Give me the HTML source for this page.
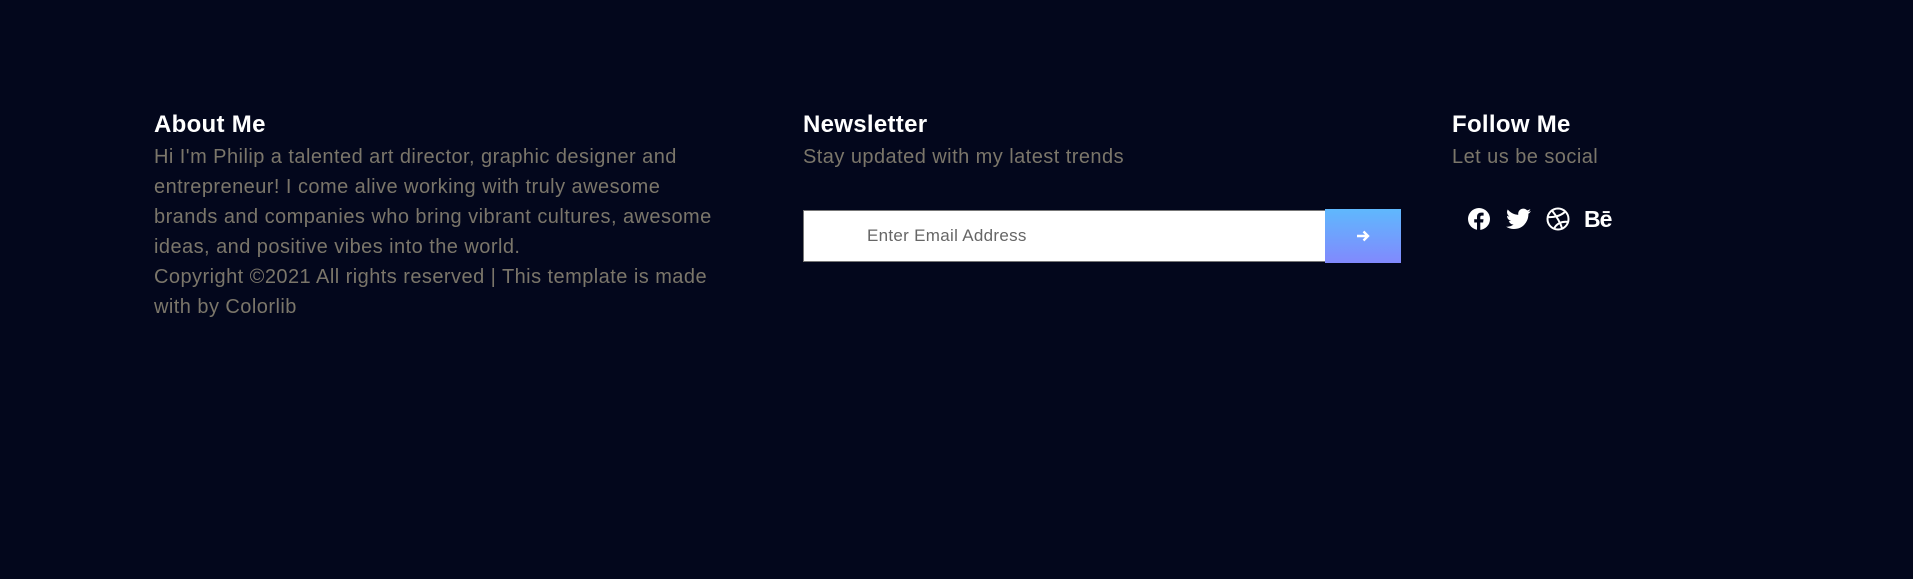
<!DOCTYPE html>
<html><head><meta charset="utf-8"><style>
html,body{margin:0;padding:0;background:#03071c;width:1913px;height:579px;overflow:hidden;font-family:"Liberation Sans",sans-serif}
.h{position:absolute;color:#fff;font-weight:bold;font-size:24px;letter-spacing:0.3px}
.p{position:absolute;color:#7b766a;font-size:20px;letter-spacing:0.45px;line-height:30px}
</style></head><body>
<div class="h" style="left:154px;top:111px">About Me</div>
<div class="p" style="left:154px;top:142px;width:640px">Hi I'm Philip a talented art director, graphic designer and<br>entrepreneur! I come alive working with truly awesome<br>brands and companies who bring vibrant cultures, awesome<br>ideas, and positive vibes into the world.<br>Copyright ©2021 All rights reserved | This template is made<br>with by Colorlib</div>
<div class="h" style="left:803px;top:111px">Newsletter</div>
<div class="p" style="left:803px;top:142px">Stay updated with my latest trends</div>
<div style="position:absolute;left:803px;top:210px;width:522px;height:50px;background:#fff;border:1px solid #777;border-right:none"></div>
<div style="position:absolute;left:867px;top:226px;color:#666;font-size:17px;letter-spacing:0.3px">Enter Email Address</div>
<div style="position:absolute;left:1325px;top:209px;width:76px;height:54px;background:linear-gradient(#5fb8fd,#8189fd);display:flex;align-items:center;justify-content:center">
<svg width="16" height="16" viewBox="0 0 16 16"><path d="M2 8h11M8.5 3.5L13 8l-4.5 4.5" stroke="#fff" stroke-width="2.4" fill="none"/></svg></div>
<div class="h" style="left:1452px;top:111px">Follow Me</div>
<div class="p" style="left:1452px;top:142px">Let us be social</div>
<svg style="position:absolute;left:1467px;top:207px" width="24" height="24" viewBox="0 0 24 24"><circle cx="12" cy="12" r="11" fill="#fff"/><path d="M13.3 24v-8.5h2.8l.4-3.3h-3.2v-2c0-.9.3-1.6 1.6-1.6h1.7V5.7c-.3 0-1.3-.1-2.5-.1-2.5 0-4.1 1.5-4.1 4.2v2.4H7.2v3.3H10V24z" fill="#03071c"/></svg>
<svg style="position:absolute;left:1506px;top:208px" width="25" height="22" viewBox="0 0 24 20"><path d="M24 2.4c-.9.4-1.8.6-2.8.8 1-.6 1.8-1.6 2.2-2.7-1 .6-2 1-3.1 1.2C19.3.7 18 0 16.6 0c-2.7 0-4.9 2.2-4.9 4.9 0 .4 0 .8.1 1.1C7.7 5.8 4.1 3.9 1.7.9c-.4.7-.7 1.600-.7 2.5 0 1.7.9 3.2 2.2 4.1-.8 0-1.6-.2-2.2-.6v.1c0 2.4 1.7 4.4 3.900 4.8-.4.1-.8.2-1.3.2-.3 0-.6 0-.9-.1.6 2 2.4 3.4 4.6 3.4-1.7 1.3-3.8 2.1-6.1 2.1-.4 0-.8 0-1.2-.1C2.2 18.8 4.8 19.6 7.5 19.6c9.1 0 14-7.5 14-14v-.6c1-.7 1.8-1.6 2.5-2.6z" fill="#fff"/></svg>
<svg style="position:absolute;left:1546px;top:207px" width="24" height="24" viewBox="0 0 24 24" fill="none" stroke="#fff" stroke-width="2"><circle cx="12" cy="12" r="10.5"/><path d="M6 3.5c4 5 8 11 10.5 19M1.8 10c6 .5 13-1 17.5-5.5M8 22c2-5 7-8 14.5-7"/></svg>
<div style="position:absolute;left:1584px;top:206px;color:#fff;font-weight:bold;font-size:23px;letter-spacing:-1px">Bē</div>
</body></html>
